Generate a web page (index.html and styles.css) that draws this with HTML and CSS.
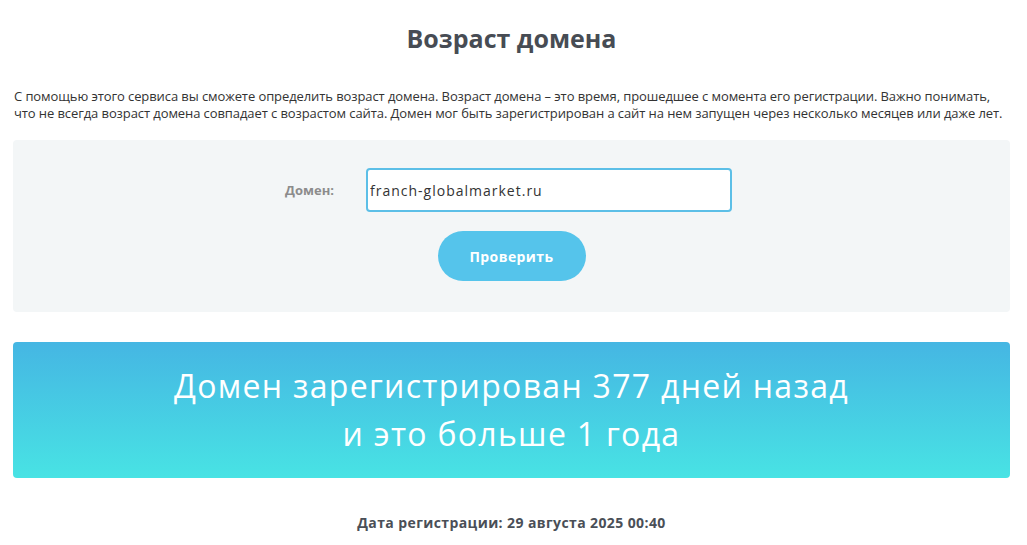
FILE: index.html
```html
<!DOCTYPE html>
<html lang="ru">
<head>
<meta charset="utf-8">
<title>Возраст домена</title>
<link rel="stylesheet" href="styles.css">
</head>
<body>
<div class="page">
  <h1 class="title">Возраст домена</h1>
  <p class="intro">С помощью этого сервиса вы сможете определить возраст домена. Возраст домена – это время, прошедшее с момента его регистрации. Важно понимать,<br>что не всегда возраст домена совпадает с возрастом сайта. Домен мог быть зарегистрирован а сайт на нем запущен через несколько месяцев или даже лет.</p>
  <form class="check-form">
    <div class="field">
      <label class="field-label" for="domain">Домен:</label>
      <input class="field-input" id="domain" type="text" value="franch-globalmarket.ru">
    </div>
    <button class="check-btn" type="button">Проверить</button>
  </form>
  <div class="result">Домен зарегистрирован 377 дней назад<br>и это больше 1 года</div>
  <div class="reg-date">Дата регистрации: 29 августа 2025 00:40</div>
</div>
</body>
</html>
```
FILE: styles.css
```css
* { box-sizing: border-box; }
html, body { margin: 0; padding: 0; background: #fff; }
body { font-family: "Open Sans", "Liberation Sans", sans-serif; color: #333; }
.page { padding: 0 17px 0 13px; }
.title {
  margin: 0;
  padding-top: 22px;
  font-size: 25px;
  line-height: 32px;
  font-weight: 700;
  color: #474c54;
  text-align: center;
}
.intro {
  margin: 34px -10px 0 1px;
  font-size: 13px;
  line-height: 17px;
  letter-spacing: -0.09px;
  color: #333;
}
.check-form {
  margin-top: 18px;
  background: #f3f6f7;
  border-radius: 4px;
  padding: 28px 0 31px;
  display: flex;
  flex-direction: column;
  align-items: center;
  gap: 19px;
}
.field {
  align-self: stretch;
  display: flex;
  align-items: center;
  padding-left: 251px;
}
.field-label {
  width: 70px;
  text-align: right;
  margin-right: 32px;
  font-size: 13px;
  font-weight: 700;
  color: #8c8c8c;
}
.field-input {
  width: 366px;
  height: 44px;
  border: 2px solid #5cbfe7;
  border-radius: 4px;
  padding: 0 0 0 2px;
  font-family: inherit;
  font-size: 14px;
  letter-spacing: 1px;
  font-weight: 500;
  color: #333;
  background: #fff;
  outline: none;
}
.check-btn {
  width: 148px;
  height: 50px;
  border: none;
  border-radius: 25px;
  background: #55c4eb;
  color: #fff;
  font-family: inherit;
  font-size: 14px;
  letter-spacing: 0.4px;
  font-weight: 700;
}
.result {
  margin-top: 30px;
  padding: 20px 0;
  border-radius: 4px;
  background: linear-gradient(to bottom, #45b6e3, #48e3e4);
  color: #fff;
  text-align: center;
  font-size: 32px;
  letter-spacing: 1.3px;
  font-weight: 400;
  line-height: 48px;
}
.reg-date {
  margin-top: 35px;
  text-align: center;
  font-size: 14px;
  line-height: 20px;
  letter-spacing: 0.4px;
  font-weight: 700;
  color: #4a4f57;
}
```
